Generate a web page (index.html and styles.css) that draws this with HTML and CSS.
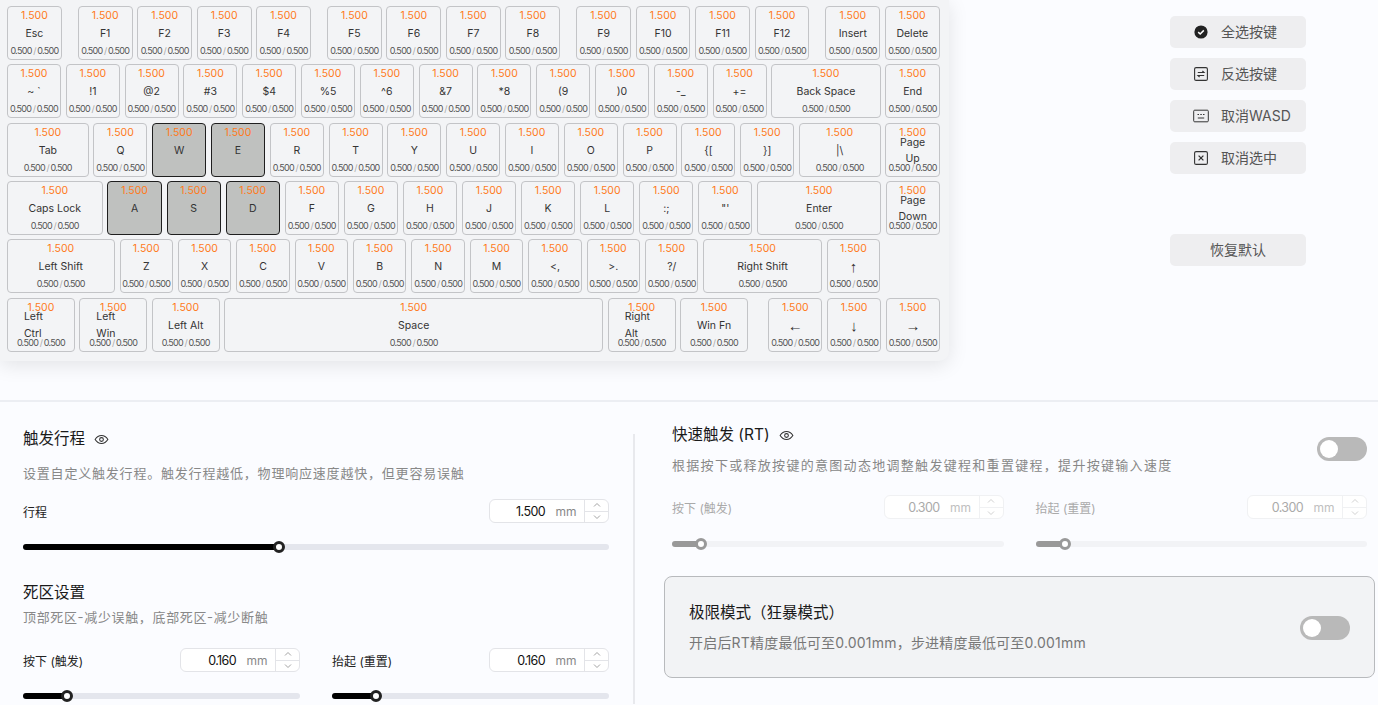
FILE: index.html
```html
<!DOCTYPE html>
<html lang="zh-CN">
<head>
  <meta charset="UTF-8">
  <title>键盘设置</title>
  <link rel="stylesheet" href="styles.css">
</head>
<body>
  <div class="top">
    <!-- Keyboard -->
    <div class="keyboard">
      <div class="row row-fn">
        <div class="key"><div class="val">1.500</div><div class="name">Esc</div><div class="range">0.500<i>/</i>0.500</div></div>
        <div class="spacer"></div>
        <div class="key"><div class="val">1.500</div><div class="name">F1</div><div class="range">0.500<i>/</i>0.500</div></div>
        <div class="key"><div class="val">1.500</div><div class="name">F2</div><div class="range">0.500<i>/</i>0.500</div></div>
        <div class="key"><div class="val">1.500</div><div class="name">F3</div><div class="range">0.500<i>/</i>0.500</div></div>
        <div class="key"><div class="val">1.500</div><div class="name">F4</div><div class="range">0.500<i>/</i>0.500</div></div>
        <div class="spacer"></div>
        <div class="key"><div class="val">1.500</div><div class="name">F5</div><div class="range">0.500<i>/</i>0.500</div></div>
        <div class="key"><div class="val">1.500</div><div class="name">F6</div><div class="range">0.500<i>/</i>0.500</div></div>
        <div class="key"><div class="val">1.500</div><div class="name">F7</div><div class="range">0.500<i>/</i>0.500</div></div>
        <div class="key"><div class="val">1.500</div><div class="name">F8</div><div class="range">0.500<i>/</i>0.500</div></div>
        <div class="spacer"></div>
        <div class="key"><div class="val">1.500</div><div class="name">F9</div><div class="range">0.500<i>/</i>0.500</div></div>
        <div class="key"><div class="val">1.500</div><div class="name">F10</div><div class="range">0.500<i>/</i>0.500</div></div>
        <div class="key"><div class="val">1.500</div><div class="name">F11</div><div class="range">0.500<i>/</i>0.500</div></div>
        <div class="key"><div class="val">1.500</div><div class="name">F12</div><div class="range">0.500<i>/</i>0.500</div></div>
        <div class="spacer"></div>
        <div class="key"><div class="val">1.500</div><div class="name">Insert</div><div class="range">0.500<i>/</i>0.500</div></div>
        <div class="key"><div class="val">1.500</div><div class="name">Delete</div><div class="range">0.500<i>/</i>0.500</div></div>
      </div>
      <div class="row row-num">
        <div class="key"><div class="val">1.500</div><div class="name">~ `</div><div class="range">0.500<i>/</i>0.500</div></div>
        <div class="key"><div class="val">1.500</div><div class="name">!1</div><div class="range">0.500<i>/</i>0.500</div></div>
        <div class="key"><div class="val">1.500</div><div class="name">@2</div><div class="range">0.500<i>/</i>0.500</div></div>
        <div class="key"><div class="val">1.500</div><div class="name">#3</div><div class="range">0.500<i>/</i>0.500</div></div>
        <div class="key"><div class="val">1.500</div><div class="name">$4</div><div class="range">0.500<i>/</i>0.500</div></div>
        <div class="key"><div class="val">1.500</div><div class="name">%5</div><div class="range">0.500<i>/</i>0.500</div></div>
        <div class="key"><div class="val">1.500</div><div class="name">^6</div><div class="range">0.500<i>/</i>0.500</div></div>
        <div class="key"><div class="val">1.500</div><div class="name">&amp;7</div><div class="range">0.500<i>/</i>0.500</div></div>
        <div class="key"><div class="val">1.500</div><div class="name">*8</div><div class="range">0.500<i>/</i>0.500</div></div>
        <div class="key"><div class="val">1.500</div><div class="name">(9</div><div class="range">0.500<i>/</i>0.500</div></div>
        <div class="key"><div class="val">1.500</div><div class="name">)0</div><div class="range">0.500<i>/</i>0.500</div></div>
        <div class="key"><div class="val">1.500</div><div class="name">-_</div><div class="range">0.500<i>/</i>0.500</div></div>
        <div class="key"><div class="val">1.500</div><div class="name">+=</div><div class="range">0.500<i>/</i>0.500</div></div>
        <div class="key backspace"><div class="val">1.500</div><div class="name">Back Space</div><div class="range">0.500<i>/</i>0.500</div></div>
        <div class="key last"><div class="val">1.500</div><div class="name">End</div><div class="range">0.500<i>/</i>0.500</div></div>
      </div>
      <div class="row row-num">
        <div class="key tab"><div class="val">1.500</div><div class="name">Tab</div><div class="range">0.500<i>/</i>0.500</div></div>
        <div class="key"><div class="val">1.500</div><div class="name">Q</div><div class="range">0.500<i>/</i>0.500</div></div>
        <div class="key on"><div class="val">1.500</div><div class="name">W</div></div>
        <div class="key on"><div class="val">1.500</div><div class="name">E</div></div>
        <div class="key"><div class="val">1.500</div><div class="name">R</div><div class="range">0.500<i>/</i>0.500</div></div>
        <div class="key"><div class="val">1.500</div><div class="name">T</div><div class="range">0.500<i>/</i>0.500</div></div>
        <div class="key"><div class="val">1.500</div><div class="name">Y</div><div class="range">0.500<i>/</i>0.500</div></div>
        <div class="key"><div class="val">1.500</div><div class="name">U</div><div class="range">0.500<i>/</i>0.500</div></div>
        <div class="key"><div class="val">1.500</div><div class="name">I</div><div class="range">0.500<i>/</i>0.500</div></div>
        <div class="key"><div class="val">1.500</div><div class="name">O</div><div class="range">0.500<i>/</i>0.500</div></div>
        <div class="key"><div class="val">1.500</div><div class="name">P</div><div class="range">0.500<i>/</i>0.500</div></div>
        <div class="key"><div class="val">1.500</div><div class="name">{[</div><div class="range">0.500<i>/</i>0.500</div></div>
        <div class="key"><div class="val">1.500</div><div class="name">}]</div><div class="range">0.500<i>/</i>0.500</div></div>
        <div class="key tab"><div class="val">1.500</div><div class="name">|\</div><div class="range">0.500<i>/</i>0.500</div></div>
        <div class="key last"><div class="val">1.500</div><div class="name"><span class="two-line mid">Page Up</span></div><div class="range">0.500<i>/</i>0.500</div></div>
      </div>
      <div class="row row-caps">
        <div class="key caps"><div class="val">1.500</div><div class="name">Caps Lock</div><div class="range">0.500<i>/</i>0.500</div></div>
        <div class="key on"><div class="val">1.500</div><div class="name">A</div></div>
        <div class="key on"><div class="val">1.500</div><div class="name">S</div></div>
        <div class="key on"><div class="val">1.500</div><div class="name">D</div></div>
        <div class="key"><div class="val">1.500</div><div class="name">F</div><div class="range">0.500<i>/</i>0.500</div></div>
        <div class="key"><div class="val">1.500</div><div class="name">G</div><div class="range">0.500<i>/</i>0.500</div></div>
        <div class="key"><div class="val">1.500</div><div class="name">H</div><div class="range">0.500<i>/</i>0.500</div></div>
        <div class="key"><div class="val">1.500</div><div class="name">J</div><div class="range">0.500<i>/</i>0.500</div></div>
        <div class="key"><div class="val">1.500</div><div class="name">K</div><div class="range">0.500<i>/</i>0.500</div></div>
        <div class="key"><div class="val">1.500</div><div class="name">L</div><div class="range">0.500<i>/</i>0.500</div></div>
        <div class="key"><div class="val">1.500</div><div class="name">:;</div><div class="range">0.500<i>/</i>0.500</div></div>
        <div class="key"><div class="val">1.500</div><div class="name">"'</div><div class="range">0.500<i>/</i>0.500</div></div>
        <div class="key enter"><div class="val">1.500</div><div class="name">Enter</div><div class="range">0.500<i>/</i>0.500</div></div>
        <div class="key last"><div class="val">1.500</div><div class="name"><span class="two-line mid">Page Down</span></div><div class="range">0.500<i>/</i>0.500</div></div>
      </div>
      <div class="row row-shift">
        <div class="key lshift"><div class="val">1.500</div><div class="name">Left Shift</div><div class="range">0.500<i>/</i>0.500</div></div>
        <div class="key"><div class="val">1.500</div><div class="name">Z</div><div class="range">0.500<i>/</i>0.500</div></div>
        <div class="key"><div class="val">1.500</div><div class="name">X</div><div class="range">0.500<i>/</i>0.500</div></div>
        <div class="key"><div class="val">1.500</div><div class="name">C</div><div class="range">0.500<i>/</i>0.500</div></div>
        <div class="key"><div class="val">1.500</div><div class="name">V</div><div class="range">0.500<i>/</i>0.500</div></div>
        <div class="key"><div class="val">1.500</div><div class="name">B</div><div class="range">0.500<i>/</i>0.500</div></div>
        <div class="key"><div class="val">1.500</div><div class="name">N</div><div class="range">0.500<i>/</i>0.500</div></div>
        <div class="key"><div class="val">1.500</div><div class="name">M</div><div class="range">0.500<i>/</i>0.500</div></div>
        <div class="key"><div class="val">1.500</div><div class="name">&lt;,</div><div class="range">0.500<i>/</i>0.500</div></div>
        <div class="key"><div class="val">1.500</div><div class="name">&gt;.</div><div class="range">0.500<i>/</i>0.500</div></div>
        <div class="key"><div class="val">1.500</div><div class="name">?/</div><div class="range">0.500<i>/</i>0.500</div></div>
        <div class="key rshift"><div class="val">1.500</div><div class="name">Right Shift</div><div class="range">0.500<i>/</i>0.500</div></div>
        <div class="key"><div class="val">1.500</div><div class="name arrow">↑</div><div class="range">0.500<i>/</i>0.500</div></div>
      </div>
      <div class="row row-bottom">
        <div class="key mod"><div class="val">1.500</div><div class="name"><span class="two-line">Left Ctrl</span></div><div class="range">0.500<i>/</i>0.500</div></div>
        <div class="key mod"><div class="val">1.500</div><div class="name"><span class="two-line">Left Win</span></div><div class="range">0.500<i>/</i>0.500</div></div>
        <div class="key mod"><div class="val">1.500</div><div class="name">Left Alt</div><div class="range">0.500<i>/</i>0.500</div></div>
        <div class="key space"><div class="val">1.500</div><div class="name">Space</div><div class="range">0.500<i>/</i>0.500</div></div>
        <div class="key mod"><div class="val">1.500</div><div class="name"><span class="two-line">Right Alt</span></div><div class="range">0.500<i>/</i>0.500</div></div>
        <div class="key mod"><div class="val">1.500</div><div class="name">Win Fn</div><div class="range">0.500<i>/</i>0.500</div></div>
        <div class="spacer wide"></div>
        <div class="key"><div class="val">1.500</div><div class="name arrow">←</div><div class="range">0.500<i>/</i>0.500</div></div>
        <div class="key"><div class="val">1.500</div><div class="name arrow">↓</div><div class="range">0.500<i>/</i>0.500</div></div>
        <div class="key"><div class="val">1.500</div><div class="name arrow">→</div><div class="range">0.500<i>/</i>0.500</div></div>
      </div>
    </div>

    <!-- Side buttons -->
    <div class="side">
      <button class="side-btn">
        <svg class="side-icon" viewBox="0 0 16 16"><circle cx="8" cy="8" r="6.6" fill="#222"/><path d="M5.2 8.1l2 1.9 3.6-3.6" fill="none" stroke="#fff" stroke-width="1.5"/></svg>
        <span>全选按键</span>
      </button>
      <button class="side-btn">
        <svg class="side-icon" viewBox="0 0 16 16" fill="none" stroke="#333"><rect x="1.6" y="1.6" width="12.8" height="12.8" rx="1.5" stroke-width="1.1"/><path d="M4.8 6.500h6.200L9.400 5M11.200 9.500H5l1.600 1.500" stroke-width="1.1"/></svg>
        <span>反选按键</span>
      </button>
      <button class="side-btn">
        <svg class="side-icon" viewBox="0 0 16 16" fill="none" stroke="#333"><rect x="0.7" y="2.2" width="14.6" height="11.6" rx="1" stroke-width="1"/><path d="M4.500 6.500h1.500M7.300 6.500h1.500M10 6.500h1.500M4.800 10h6.400" stroke-width="1"/></svg>
        <span>取消WASD</span>
      </button>
      <button class="side-btn">
        <svg class="side-icon" viewBox="0 0 16 16" fill="none" stroke="#333"><rect x="1.6" y="1.6" width="12.8" height="12.8" rx="1.5" stroke-width="1.1"/><path d="M5.600 5.600l4.800 4.800M10.400 5.600l-4.800 4.800" stroke-width="1.3"/></svg>
        <span>取消选中</span>
      </button>
      <button class="side-btn reset"><span>恢复默认</span></button>
    </div>
  </div>

  <!-- Settings -->
  <div class="settings">
    <div class="col col-left">
      <div class="title-row">
        <span class="title">触发行程</span>
        <svg class="eye" viewBox="0 0 16 16" fill="none" stroke="#333"><path d="M1.200 8C3 5.200 5.300 3.800 8 3.800s5 1.400 6.800 4.200C13 10.800 10.700 12.200 8 12.200S3 10.800 1.200 8z" stroke-width="1.100"/><circle cx="8" cy="8" r="2" stroke-width="1.100"/></svg>
      </div>
      <p class="desc">设置自定义触发行程。触发行程越低，物理响应速度越快，但更容易误触</p>
      <div class="field field-travel">
        <div class="field-head">
          <span class="field-label">行程</span>
          <div class="num">
            <span class="num-val">1.500</span><span class="num-unit">mm</span>
            <div class="num-step"><span><svg viewBox="0 0 10 6"><path d="M2 4.500L5 1.500l3 3"/></svg></span><span><svg viewBox="0 0 10 6"><path d="M2 1.500l3 3 3-3"/></svg></span></div>
          </div>
        </div>
        <div class="slider"><div class="fill" style="width: 43.7%"><b class="thumb"></b></div></div>
      </div>

      <div class="title dead-title">死区设置</div>
      <p class="desc dead-desc">顶部死区-减少误触，底部死区-减少断触</p>
      <div class="pair">
        <div class="field">
          <div class="field-head">
            <span class="field-label">按下 (触发)</span>
            <div class="num">
              <span class="num-val">0.160</span><span class="num-unit">mm</span>
              <div class="num-step"><span><svg viewBox="0 0 10 6"><path d="M2 4.500L5 1.500l3 3"/></svg></span><span><svg viewBox="0 0 10 6"><path d="M2 1.500l3 3 3-3"/></svg></span></div>
            </div>
          </div>
          <div class="slider"><div class="fill" style="width: 15.9%"><b class="thumb"></b></div></div>
        </div>
        <div class="field">
          <div class="field-head">
            <span class="field-label">抬起 (重置)</span>
            <div class="num">
              <span class="num-val">0.160</span><span class="num-unit">mm</span>
              <div class="num-step"><span><svg viewBox="0 0 10 6"><path d="M2 4.500L5 1.500l3 3"/></svg></span><span><svg viewBox="0 0 10 6"><path d="M2 1.500l3 3 3-3"/></svg></span></div>
            </div>
          </div>
          <div class="slider"><div class="fill" style="width: 15.9%"><b class="thumb"></b></div></div>
        </div>
      </div>
    </div>

    <div class="col col-right">
      <div class="rt-head">
        <div>
          <div class="title-row rt-title">
            <span class="title">快速触发 (RT)</span>
            <svg class="eye" viewBox="0 0 16 16" fill="none" stroke="#333"><path d="M1.200 8C3 5.200 5.300 3.800 8 3.800s5 1.400 6.800 4.200C13 10.800 10.700 12.200 8 12.200S3 10.800 1.200 8z" stroke-width="1.100"/><circle cx="8" cy="8" r="2" stroke-width="1.100"/></svg>
          </div>
          <p class="desc rt-desc">根据按下或释放按键的意图动态地调整触发键程和重置键程，提升按键输入速度</p>
        </div>
        <div class="toggle"><b></b></div>
      </div>
      <div class="pair rt-pair off">
        <div class="field">
          <div class="field-head">
            <span class="field-label">按下 (触发)</span>
            <div class="num">
              <span class="num-val">0.300</span><span class="num-unit">mm</span>
              <div class="num-step"><span><svg viewBox="0 0 10 6"><path d="M2 4.500L5 1.500l3 3"/></svg></span><span><svg viewBox="0 0 10 6"><path d="M2 1.500l3 3 3-3"/></svg></span></div>
            </div>
          </div>
          <div class="slider"><div class="fill" style="width: 8.8%"><b class="thumb"></b></div></div>
        </div>
        <div class="field">
          <div class="field-head">
            <span class="field-label">抬起 (重置)</span>
            <div class="num">
              <span class="num-val">0.300</span><span class="num-unit">mm</span>
              <div class="num-step"><span><svg viewBox="0 0 10 6"><path d="M2 4.500L5 1.500l3 3"/></svg></span><span><svg viewBox="0 0 10 6"><path d="M2 1.500l3 3 3-3"/></svg></span></div>
            </div>
          </div>
          <div class="slider"><div class="fill" style="width: 8.8%"><b class="thumb"></b></div></div>
        </div>
      </div>
      <div class="extreme">
        <div>
          <div class="extreme-title">极限模式（狂暴模式）</div>
          <div class="extreme-desc">开启后RT精度最低可至0.001mm，步进精度最低可至0.001mm</div>
        </div>
        <div class="toggle"><b></b></div>
      </div>
    </div>
  </div>
</body>
</html>
```

FILE: styles.css
```css
/* General */
* {
  box-sizing: border-box;
}

html, body {
  height: 705px;
  overflow: hidden;
}

body {
  margin: 0;
  background: #fbfcff;
  color: #222;
  font-family: Inter, "Noto Sans CJK SC", sans-serif;
}

.top {
  display: flex;
  align-items: flex-start;
}

/* Keyboard */
.keyboard {
  width: 949px;
  height: 361px;
  padding: 6px 9px 0 7px;
  background: #f3f4f6;
  border-radius: 0 0 10px 0;
  box-shadow: 0 4px 20px rgba(0, 0, 0, 0.1);
}

.row {
  display: flex;
  height: 54px;
  margin-bottom: 4px;
  gap: 4.8px;
}

.row:nth-child(2),
.row:nth-child(5) {
  margin-bottom: 5px;
}

.row-fn { gap: 4.7px; }
.row-caps { gap: 4.9px; }
.row-shift { gap: 5px; }
.row-bottom { gap: 4.6px; }

.spacer {
  width: 6.6px;
  flex: none;
}

.spacer.wide {
  width: 11.1px;
}

.key {
  width: 54px;
  height: 54px;
  flex: none;
  border: 1px solid #c3c4c7;
  border-radius: 4px;
  display: flex;
  flex-direction: column;
  align-items: center;
  color: #333;
}

.row-fn .key { width: 54.8px; }
.row-caps .key { width: 54.2px; }
.row-shift .key { width: 53.4px; }
.row-bottom .key { width: 54.2px; }

.key.backspace { width: 109.2px; }
.key.last { width: 54.6px; }
.key.tab { width: 81.6px; }
.row-caps .key.caps { width: 95.6px; }
.row-caps .key.enter { width: 123.4px; }
.row-caps .key.last { width: 54.2px; }
.row-shift .key.lshift { width: 107.5px; }
.row-shift .key.rshift { width: 118.4px; }
.row-bottom .key.mod { width: 67.8px; }
.row-bottom .key.space { width: 379px; }

.key.on {
  background: #bfc1bf;
  border-color: #1f1f1f;
}

.val {
  height: 17px;
  line-height: 17px;
  font-size: 10.5px;
  color: #ff7a1a;
}

.name {
  height: 18px;
  margin-top: 1px;
  line-height: 18px;
  font-size: 10.5px;
  display: flex;
  align-items: center;
  justify-content: center;
  white-space: nowrap;
}

.name.arrow {
  font-family: "Liberation Sans", sans-serif;
  font-size: 15px;
}

.two-line {
  width: 34px;
  margin-top: -2px;
  line-height: 17px;
  white-space: normal;
  text-align: left;
}

.two-line.mid {
  margin-top: 0;
  line-height: 16px;
  text-align: center;
}

.range {
  height: 16px;
  line-height: 16px;
  font-size: 9px;
  letter-spacing: -0.7px;
  color: #555;
  white-space: nowrap;
}

.range i {
  font-style: normal;
  color: #aaa;
  margin: 0 1.5px;
}

/* Side buttons */
.side {
  margin-left: 221px;
  padding-top: 16px;
  display: flex;
  flex-direction: column;
  gap: 10px;
}

.side-btn {
  width: 136px;
  height: 32px;
  padding: 0 0 0 23px;
  border: none;
  border-radius: 5px;
  background: #eeeef0;
  color: #555;
  font-family: inherit;
  font-size: 14px;
  display: flex;
  align-items: center;
  gap: 12px;
}

.side-btn span {
  margin-top: -2px;
}

.side-icon {
  width: 16px;
  height: 16px;
  flex: none;
}

.side-btn.reset {
  margin-top: 50px;
  padding: 0;
  justify-content: center;
}

/* Settings */
.settings {
  margin-top: 39px;
  border-top: 2px solid #eceef3;
  height: 304px;
  display: flex;
}

.col-left {
  width: 635px;
  padding: 27px 26px 0 23px;
  position: relative;
}

.col-left::after {
  content: "";
  position: absolute;
  right: 0;
  top: 32px;
  bottom: 0;
  width: 2px;
  background: #e8e9ed;
}

.col-right {
  flex: 1;
  padding: 23px 11px 0 29px;
}

.title-row {
  display: flex;
  align-items: center;
  gap: 9px;
  height: 20px;
}

.title {
  font-size: 15.5px;
  color: #1a1a1a;
  line-height: 20px;
}

.eye {
  width: 15px;
  height: 15px;
}

.desc {
  margin: 14px 0 0;
  font-size: 13px;
  line-height: 20px;
  letter-spacing: 0.8px;
  color: #888;
}

.field-travel {
  margin-top: 16px;
}

.field-head {
  display: flex;
  align-items: center;
  justify-content: space-between;
  height: 24px;
}

.field-label {
  font-size: 12px;
  color: #222;
}

.num {
  width: 120px;
  height: 24px;
  border: 1px solid #e3e4e8;
  border-radius: 6px;
  background: #fff;
  display: flex;
  align-items: center;
  font-size: 12.5px;
  letter-spacing: -0.6px;
}

.num-val {
  width: 55px;
  text-align: right;
  color: #111;
}

.num-unit {
  width: 39px;
  text-align: center;
  padding-left: 3px;
  font-size: 12px;
  letter-spacing: 0;
  color: #888;
}

.num-step {
  margin-left: auto;
  width: 24px;
  height: 100%;
  border-left: 1px solid #e3e4e8;
  display: flex;
  flex-direction: column;
}

.num-step span {
  flex: 1;
  display: flex;
  align-items: center;
  justify-content: center;
}

.num-step span + span {
  border-top: 1px solid #e3e4e8;
}

.num-step svg {
  width: 10px;
  height: 6px;
  fill: none;
  stroke: #999;
  stroke-width: 0.9;
}

.slider {
  height: 6px;
  margin-top: 21px;
  border-radius: 3px;
  background: #e4e6ed;
}

.fill {
  height: 100%;
  border-radius: 3px;
  background: #000;
  position: relative;
}

.thumb {
  position: absolute;
  right: -6px;
  top: -3px;
  width: 12px;
  height: 12px;
  border: 3px solid #222;
  border-radius: 50%;
  background: #fff;
}

.dead-title {
  margin-top: 33px;
}

.dead-desc {
  margin-top: 4px;
  letter-spacing: 0.65px;
}

.pair {
  display: grid;
  grid-template-columns: 1fr 1fr;
  gap: 32px;
  margin-top: 21px;
}

/* Rapid trigger */
.rt-head {
  display: flex;
  justify-content: space-between;
  align-items: flex-start;
}

.rt-title {
  margin-left: 8px;
}

.rt-desc {
  margin: 10px 0 0 8px;
  letter-spacing: 1.3px;
}

.toggle {
  width: 50px;
  height: 24px;
  flex: none;
  margin-top: 12px;
  padding: 3px 0 0 3px;
  border-radius: 12px;
  background: #b9b9b9;
}

.toggle b {
  display: block;
  width: 18px;
  height: 18px;
  border-radius: 50%;
  background: #fff;
}

.rt-pair {
  margin: 20px 0 0 8px;
}

.rt-pair .slider { margin-top: 22px; }
.off .field-label { color: #aaa; }
.off .num { border-color: #f0f1f3; }
.off .num-val { color: #aaa; }
.off .num-unit { color: #c0c0c0; }
.off .num-step { border-color: #f0f1f3; }
.off .num-step span + span { border-color: #f0f1f3; }
.off .num-step svg { stroke: #ccc; }
.off .slider { background: #f2f3f6; }
.off .fill { background: #999; }
.off .thumb { border-color: #999; }

.extreme {
  margin: 29px -8px 0 0;
  height: 102px;
  padding: 0 24px;
  border: 1px solid #b8babd;
  border-radius: 8px;
  background: #f2f3f5;
  display: flex;
  align-items: center;
  justify-content: space-between;
}

.extreme .toggle {
  margin-top: 1px;
}

.extreme-title {
  font-size: 15.5px;
  line-height: 22px;
  color: #1a1a1a;
}

.extreme-desc {
  margin-top: 9px;
  font-size: 14px;
  line-height: 20px;
  letter-spacing: 0.2px;
  color: #777;
}
```
